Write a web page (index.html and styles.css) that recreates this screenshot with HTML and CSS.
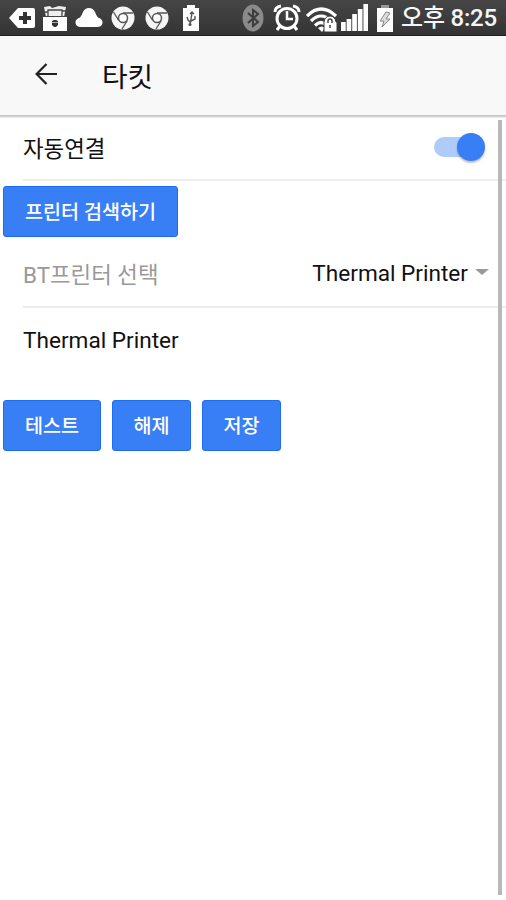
FILE: index.html
```html
<!DOCTYPE html>
<html lang="ko">
  <head>
    <meta charset="UTF-8" />
    <meta name="viewport" content="width=device-width, initial-scale=1.0" />
    <title>타킷</title>
    <link rel="stylesheet" href="styles.css">
  </head>
  <body>
    <div class="status-bar">
      <div class="status-left">
        <svg width="26" height="22" viewBox="0 0 26 22">
          <path fill="#fff" d="M9 1h15q2 0 2 2v16q0 2-2 2H9L0 11z" />
          <path stroke="#333" stroke-width="4" d="M16 5v12M10 11h12" />
        </svg>
        <svg width="24" height="26" viewBox="0 0 24 26">
          <path fill="#eee" d="M1 2l6-1 2 2 7-2 7 1-2 10H3z" />
          <path fill="none" stroke="#444" stroke-width="1.300" d="M5 11V5h14v6M5 7H1M19 6h4" />
          <path fill="#fff" d="M0 12h24v14H0z" />
          <path stroke="#444" d="M1 11.500h22" />
          <path fill="#333" d="M9 16l2-1h2l2 1v4l-2 2h-2l-2-2z" />
          <path stroke="#aaa" d="M9 17.500h6" />
        </svg>
        <svg width="28" height="22" viewBox="0 0 28 22">
          <path fill="#fff" d="M6 20q-5 0-5.500-4Q0 12 5 10.500 7 8 8 5q2-4 6-4t6 4q1 3 3 5.500 5 1.500 4.500 5.500-.5 4-5.500 4z" />
        </svg>
        <svg class="chrome" width="24" height="24" viewBox="0 0 24 24">
          <circle cx="12" cy="12" r="11.500" fill="#f5f5f5" />
          <path fill="none" stroke="#555" stroke-width="1.300" d="M12 7h10M7.700 14.500L2.500 6M16.300 14.500L11 23" />
          <circle cx="12" cy="12" r="4.500" fill="#fff" stroke="#555" stroke-width="1.500" />
        </svg>
        <svg class="chrome" width="24" height="24" viewBox="0 0 24 24">
          <circle cx="12" cy="12" r="11.500" fill="#f5f5f5" />
          <path fill="none" stroke="#555" stroke-width="1.300" d="M12 7h10M7.700 14.500L2.500 6M16.300 14.500L11 23" />
          <circle cx="12" cy="12" r="4.500" fill="#fff" stroke="#555" stroke-width="1.500" />
        </svg>
        <svg class="usb-battery" width="18" height="26" viewBox="0 0 18 26">
          <path fill="#fff" d="M5 0h8v3h4v23H1V3h4z" />
          <path fill="none" stroke="#555" stroke-width="1.400" d="M10 8l-2 12M8 17l-2-2-1-3M9 16l4-2v-3M8 9l2-2 2 2" />
          <circle cx="8" cy="19.500" r="1.600" fill="#555" />
        </svg>
      </div>
      <div class="status-right">
        <svg class="bluetooth" width="22" height="28" viewBox="0 0 22 28">
          <ellipse cx="11" cy="14" rx="10.500" ry="13.500" fill="#8a8a8a" />
          <path fill="none" stroke="#3c3c3c" stroke-width="2" d="M6 9l10 9-5 4V6l5 4-10 9" />
        </svg>
        <svg class="alarm" width="28" height="28" viewBox="0 0 28 28">
          <g fill="none" stroke="#fff">
            <circle cx="14" cy="14.500" r="10" stroke-width="3" />
            <path stroke-width="2.500" d="M14 7v8h6" />
            <path stroke-width="3" d="M2 8q0-5 6-6M26 8q0-5-6-6M7 22l-3 4M21 22l3 4" />
          </g>
        </svg>
        <svg class="wifi" width="31" height="26" viewBox="0 0 31 26">
          <g fill="none" stroke="#fff" stroke-width="3.200">
            <path d="M1 10q14-14 29 0" />
            <path d="M5 15q10-10 20 0" />
            <path d="M9 19.500q6-6 12 0" />
          </g>
          <path fill="#fff" d="M12 22q4-3 7 0l-3 4z" />
          <path fill="#fff" stroke="#3c3c3c" d="M18 16q1-6 6-6t6 6h1v10H18z" />
          <path fill="none" stroke="#444" stroke-width="1.500" d="M22 17v-2a2 2 0 0 1 4 0v2M24 19v3" />
        </svg>
        <svg class="signal" width="27" height="28" viewBox="0 0 27 28">
          <path fill="#fff" d="M0 18h4.700v9H0zM5.600 15h4.700v12H5.600zM11.200 10h4.700v17h-4.700zM16.800 5h4.700v22h-4.700zM22.400 0h4.600v27h-4.600z" />
        </svg>
        <svg class="charge" width="18" height="27" viewBox="0 0 18 27">
          <path fill="#999" d="M5 0h8v3H5z" />
          <path fill="#fff" d="M1 3h16v24H1z" />
          <path fill="#ddd" stroke="#888" d="M10 7l-6 9h4l-2 6 8-8h-4l4-6z" />
        </svg>
        <span class="clock">오후 8:25</span>
      </div>
    </div>

    <header class="toolbar">
      <svg class="back" width="22" height="22" viewBox="0 0 22 22">
        <path fill="none" stroke="#222" stroke-width="2.200" d="M22 11H2M11.500 1L1.600 11l9.900 10" />
      </svg>
      <h1>타킷</h1>
    </header>

    <main class="content">
      <div class="item item-toggle">
        <span class="label">자동연결</span>
        <span class="toggle"><span class="knob"></span></span>
      </div>
      <button class="btn btn-search">프린터 검색하기</button>
      <div class="item item-select">
        <span class="label muted">BT프린터 선택</span>
        <span class="select">Thermal Printer<span class="arrow"></span></span>
      </div>
      <div class="printer-name">Thermal Printer</div>
      <div class="actions">
        <button class="btn btn-test">테스트</button>
        <button class="btn">해제</button>
        <button class="btn">저장</button>
      </div>
      <div class="scrollbar"></div>
    </main>
  </body>
</html>
```

FILE: styles.css
```css
* {
  box-sizing: border-box;
}

body {
  margin: 0;
  height: 900px;
  display: flex;
  flex-direction: column;
  overflow: hidden;
  background-color: #fff;
  color: #111;
  font-family: Roboto, "Noto Sans CJK KR", sans-serif;
  font-size: 22.400px;
}

svg {
  display: block;
  flex: none;
}

/* Status bar */
.status-bar {
  height: 36px;
  flex: none;
  display: flex;
  justify-content: space-between;
  padding: 0 8px 0 9px;
  background: linear-gradient(#464646, #343434);
  border-bottom: 1px solid #222;
}

.status-left,
.status-right {
  display: flex;
  align-items: center;
}

.status-left {
  gap: 8px;
  padding-top: 1px;
}

.status-left .chrome {
  margin-right: 2px;
}

.usb-battery {
  margin-left: 3px;
}

.alarm {
  margin-left: 9px;
}

.wifi {
  margin: 2px 0 0 5px;
}

.signal {
  margin-left: 4px;
}

.charge {
  margin: 1px 0 0 8px;
}

.clock {
  width: 97px;
  margin-left: 7px;
  color: #f5f5f5;
  font-size: 24px;
  font-weight: 500;
  letter-spacing: -0.2px;
  line-height: 36px;
  white-space: nowrap;
}

/* Toolbar */
.toolbar {
  position: relative;
  height: 79px;
  flex: none;
  display: flex;
  align-items: center;
  padding-left: 35px;
  background-color: #f8f8f8;
  box-shadow: 0 1px 2px 1px rgba(0, 0, 0, 0.25);
}

.back {
  margin-top: -3px;
}

h1 {
  margin: 4px 0 0 45px;
  font-size: 27.800px;
  font-weight: 400;
  line-height: 40px;
}

/* Content */
.content {
  position: relative;
  flex: 1;
  padding-top: 1px;
}

.item {
  display: flex;
  align-items: center;
  justify-content: space-between;
  margin-left: 23px;
  border-bottom: 2px solid #ededed;
}

.item-toggle {
  height: 65px;
  padding-right: 21px;
}

.item-toggle .label {
  margin-bottom: 2px;
}

.item-select {
  height: 71px;
  padding: 2px 17px 0 0;
}

.muted {
  color: #999;
}

.toggle {
  position: relative;
  width: 50px;
  height: 20px;
  margin: 0 1px 2px 0;
  border-radius: 10px;
  background-color: #afcbfa;
}

.knob {
  position: absolute;
  top: -4px;
  right: -1px;
  width: 28px;
  height: 28px;
  border-radius: 50%;
  background-color: #387ef5;
  box-shadow: 0 2px 2px rgba(0, 0, 0, 0.25);
}

.select {
  display: flex;
  align-items: center;
  padding-top: 2px;
  font-size: 22.600px;
}

.arrow {
  margin: -3px 0 0 7px;
  border: 7px solid transparent;
  border-top: 6px solid #999;
  border-bottom: 0;
}

.btn {
  display: block;
  width: 79px;
  height: 51px;
  padding: 0 0 3px;
  border: 1px solid #1d6eec;
  border-radius: 3px;
  background-color: #387ef5;
  color: #fff;
  font-family: inherit;
  font-size: 19.600px;
  font-weight: 500;
  white-space: nowrap;
}

.btn-search {
  width: 175px;
  margin: 5px 0 0 3px;
}

.btn-test {
  width: 98px;
}

.printer-name {
  height: 64px;
  padding-left: 23px;
  font-size: 22.600px;
  line-height: 66px;
}

.actions {
  display: flex;
  gap: 11px;
  margin: 28px 0 0 3px;
}

.scrollbar {
  position: absolute;
  top: 5px;
  right: 4px;
  width: 4px;
  height: 775px;
  background-color: #b8b8b8;
}
```
